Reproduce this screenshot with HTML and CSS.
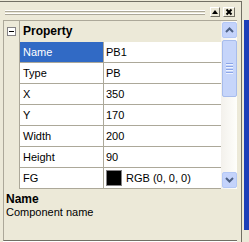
FILE: index.html
```html
<!DOCTYPE html>
<html>
  <head>
  <link rel="stylesheet" href="styles.css">
  </head>
  <body>
  <div class="frame">
    <div class="panel">
      <div class="caption">
        <div class="grip">
          <div class="grip-line"></div>
          <div class="grip-line"></div>
        </div>
        <div class="cap-btn">
          <svg width="8" height="8" viewBox="0 0 8 8"><polygon points="1,6 7,6 4,2" fill="#000"/></svg>
        </div>
        <div class="cap-btn close">
          <svg width="8" height="8" viewBox="0 0 8 8"><path d="M1.5 1.5 L6.5 6.5 M6.5 1.5 L1.5 6.5" stroke="#000" stroke-width="2"/></svg>
        </div>
      </div>

      <div class="grid">
        <div class="gutter">
          <div class="toggle"><span class="minus"></span></div>
        </div>
        <div class="rows">
          <div class="cat">Property</div>
          <div class="row selected"><div class="key">Name</div><div class="val">PB1</div></div>
          <div class="row"><div class="key">Type</div><div class="val">PB</div></div>
          <div class="row"><div class="key">X</div><div class="val">350</div></div>
          <div class="row"><div class="key">Y</div><div class="val">170</div></div>
          <div class="row"><div class="key">Width</div><div class="val">200</div></div>
          <div class="row"><div class="key">Height</div><div class="val">90</div></div>
          <div class="row"><div class="key">FG</div><div class="val"><span class="swatch"></span>RGB (0, 0, 0)</div></div>
        </div>
        <div class="scroll">
          <div class="sbtn">
            <svg width="9" height="6" viewBox="0 0 9 6"><polyline points="1,5 4.5,1.5 8,5" fill="none" stroke="#4D6185" stroke-width="2"/></svg>
          </div>
          <div class="track">
            <div class="thumb">
              <div class="thumb-grip"><i></i><i></i><i></i><i></i></div>
            </div>
          </div>
          <div class="sbtn">
            <svg width="9" height="6" viewBox="0 0 9 6"><polyline points="1,1 4.5,4.5 8,1" fill="none" stroke="#4D6185" stroke-width="2"/></svg>
          </div>
        </div>
      </div>

      <div class="desc">
        <div class="desc-title">Name</div>
        <div class="desc-text">Component name</div>
      </div>
    </div>
    <div class="side"></div>
  </div>
  </body>
</html>
```

FILE: styles.css
```css
body {
  margin: 0;
  background: #ECE9D8;
  font: 11px "Liberation Sans", Arial, sans-serif;
  color: #000;
}
.frame {
  display: flex;
  width: 249px;
  height: 242px;
}
.panel {
  width: 241px;
  margin-top: 1px;
  border-top: 1px solid #716F64;
  border-right: 1px solid #716F64;
  display: flex;
  flex-direction: column;
}
.side {
  width: 5px;
  margin: 20px 0 0 2px;
  height: 210px;
  background: #1C3EB8;
}
.caption {
  height: 18px;
  display: flex;
  align-items: center;
  padding: 0 6px 0 5px;
}
.grip {
  flex: 1;
  display: flex;
  flex-direction: column;
  gap: 1px;
  margin: 2px 2px 0 0;
}
.grip-line {
  border-top: 1px solid #fff;
  border-bottom: 1px solid #ACA899;
  height: 0;
}
.cap-btn {
  width: 8px;
  height: 8px;
  margin-left: 3px;
  margin-top: 2px;
  border: 1px solid;
  border-color: #fff #716F64 #716F64 #fff;
  display: flex;
  align-items: center;
  justify-content: center;
}
.cap-btn.close {
  width: 10px;
}
.grid {
  display: flex;
  height: 168px;
  margin: 0 4px 0 3px;
  border-top: 1px solid #ACA899;
  border-left: 1px solid #ACA899;
  background: #fff;
}
.gutter {
  width: 15px;
  background: #ECE9D8;
  border-right: 1px solid #ACA899;
}
.toggle {
  height: 21px;
  display: flex;
  align-items: center;
  justify-content: center;
}
.minus {
  width: 7px;
  height: 7px;
  border: 1px solid #848284;
  background: #fff;
  position: relative;
}
.minus::after {
  content: "";
  position: absolute;
  left: 1px;
  top: 3px;
  width: 5px;
  height: 1px;
  background: #000;
}
.rows {
  flex: 1;
  display: flex;
  flex-direction: column;
}
.cat {
  height: 21px;
  line-height: 21px;
  padding-left: 3px;
  font-weight: bold;
  font-size: 12px;
  background: #ECE9D8;
}
.row {
  display: flex;
  height: 20px;
  border-bottom: 1px solid #ACA899;
}
.key {
  width: 80px;
  padding-left: 3px;
  line-height: 20px;
  border-right: 1px solid #ACA899;
}
.val {
  flex: 1;
  padding-left: 2px;
  line-height: 20px;
  display: flex;
  align-items: center;
}
.selected .key {
  background: #316AC5;
  color: #fff;
}
.swatch {
  width: 14px;
  height: 14px;
  background: #000;
  border: 1px solid #848284;
  margin-right: 4px;
}
.scroll {
  width: 16px;
  display: flex;
  flex-direction: column;
  background: linear-gradient(to right, #F3F1EC, #FEFEFB);
}
.sbtn {
  height: 14px;
  margin: 1px 0 1px 1px;
  border: 1px solid #B4C8F6;
  border-radius: 2px;
  background: #C4D3FB;
  display: flex;
  align-items: center;
  justify-content: center;
}
.track {
  flex: 1;
  padding-top: 1px;
}
.thumb {
  height: 55px;
  margin-left: 1px;
  border: 1px solid #A7BCEC;
  border-radius: 2px;
  background: #C6D5FA;
  display: flex;
  align-items: center;
  justify-content: center;
}
.thumb-grip {
  display: flex;
  flex-direction: column;
  gap: 1px;
}
.thumb-grip i {
  display: block;
  width: 7px;
  height: 1px;
  background: #8CA6E8;
  border-bottom: 1px solid #EEF3FE;
}
.desc {
  height: 47px;
  margin: 0 4px 0 3px;
  border-left: 1px solid #ACA899;
  border-bottom: 1px solid #716F64;
  box-shadow: 0 1px 0 #fff;
  padding: 4px 0 0 2px;
}
.desc-title {
  font-weight: bold;
  font-size: 12px;
  line-height: 13px;
}
.desc-text {
  font-size: 11px;
  line-height: 13px;
}
```
